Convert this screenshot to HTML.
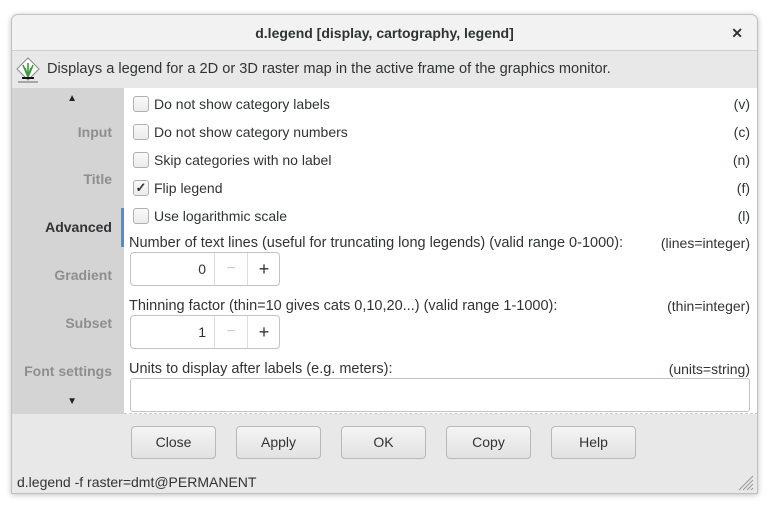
<!DOCTYPE html>
<html><head><style>
*{box-sizing:border-box;margin:0;padding:0}
body{width:774px;height:506px;background:#fff;font-family:"Liberation Sans",sans-serif;font-size:14px;color:#2e3436;position:relative;overflow:hidden}
.win{position:absolute;left:11px;top:14px;width:747px;height:480px;background:#e8e8e8;border:1px solid #c0c0c0;border-radius:7px 7px 0 0;box-shadow:0 1px 6px rgba(0,0,0,.25);overflow:hidden}
.title{position:absolute;left:0;top:0;width:100%;height:36px;background:#f2f2f2;border-bottom:1px solid #cfcfcf;text-align:center;line-height:36px;font-weight:bold;font-size:14px}
.x{position:absolute;right:14px;top:0;font-size:14px;font-weight:bold}
.desc{position:absolute;left:0;top:37px;width:100%;height:36px;line-height:34px;padding-left:35px;font-size:14.6px}
.side{position:absolute;left:0;top:73px;width:112px;height:326px;background:#d4d4d4}
.side div{position:absolute;right:12px;font-weight:bold;color:#8e8e8e;font-size:14px}
.content{position:absolute;left:112px;top:73px;width:634px;height:326px;background:#fff;border-right:1px dashed #ccc;border-bottom:1px dashed #ccc}
.row{position:absolute;left:9px;right:7px;height:20px;line-height:20px}
.cb{position:absolute;left:0;top:2px;width:16px;height:16px;border:1px solid #b0b0b0;border-radius:3px;background:linear-gradient(#fafafa,#ececec)}
.row .t{position:absolute;left:21px}
.row .r{position:absolute;right:0}
.lbl{position:absolute;left:5px;right:7px;height:18px;line-height:18px;font-size:14.5px}
.lbl .r{position:absolute;right:0;font-size:14px}
.spin{position:absolute;left:6px;width:150px;height:34px;border:1px solid #c3c3c3;border-radius:4px;background:#fff}
.spin .v{position:absolute;left:0;width:75px;text-align:right;top:8px}
.spin .m{position:absolute;left:83px;width:33px;height:100%;border-left:1px solid #ddd;text-align:center;line-height:32px;color:#ccc;font-size:16px}
.spin .p{position:absolute;left:116px;width:33px;height:100%;border-left:1px solid #ddd;text-align:center;line-height:32px;font-size:18px}
.btn{position:absolute;top:411px;width:85px;height:33px;border:1px solid #b8b8b8;border-radius:4px;background:linear-gradient(#f4f4f4,#e2e2e2);text-align:center;line-height:31px;font-size:14px}
.status{position:absolute;left:5px;top:459px;font-size:14px}
</style></head><body>
<div class="win">
<div class="title">d.legend [display, cartography, legend]<span class="x">✕</span></div>
<div class="desc">
<svg style="position:absolute;left:4px;top:5px" width="24" height="26" viewBox="0 0 24 26"><path d="M12 1 L23 12 L12 23 L1 12 Z" fill="#fff" stroke="#888" stroke-width="1"/><path d="M12 20 L7 8 M12 20 L12 6 M12 20 L17 8 M12 20 L9 11 M12 20 L15 11" stroke="#3a9a3a" stroke-width="1.6" fill="none"/><path d="M6 21 h12" stroke="#111" stroke-width="2"/><path d="M2 25 h20" stroke="#666"/></svg>
Displays a legend for a 2D or 3D raster map in the active frame of the graphics monitor.</div>
<div class="side">
<div style="right:47px;top:5px;font-size:10px;color:#222">▲</div>
<div style="top:36px">Input</div>
<div style="top:83px">Title</div>
<div style="top:131px;color:#2e3436">Advanced</div>
<div style="top:179px">Gradient</div>
<div style="top:227px">Subset</div>
<div style="top:275px">Font settings</div>
<div style="right:47px;top:308px;font-size:10px;color:#222">▼</div>
</div>
<div style="position:absolute;left:109px;top:193px;width:3px;height:39px;background:#4a90d9"></div>
<div class="content">
<div class="row" style="top:6px"><span class="cb"></span><span class="t">Do not show category labels</span><span class="r">(v)</span></div>
<div class="row" style="top:34px"><span class="cb"></span><span class="t">Do not show category numbers</span><span class="r">(c)</span></div>
<div class="row" style="top:62px"><span class="cb"></span><span class="t">Skip categories with no label</span><span class="r">(n)</span></div>
<div class="row" style="top:90px"><span class="cb" style="text-align:center;line-height:13px;font-size:13px;font-weight:bold">✓</span><span class="t">Flip legend</span><span class="r">(f)</span></div>
<div class="row" style="top:118px"><span class="cb"></span><span class="t">Use logarithmic scale</span><span class="r">(l)</span></div>
<div class="lbl" style="top:146px">Number of text lines (useful for truncating long legends) (valid range 0-1000):<span class="r">(lines=integer)</span></div>
<div class="spin" style="top:164px"><span class="v">0</span><span class="m">−</span><span class="p">+</span></div>
<div class="lbl" style="top:209px">Thinning factor (thin=10 gives cats 0,10,20...) (valid range 1-1000):<span class="r">(thin=integer)</span></div>
<div class="spin" style="top:227px"><span class="v">1</span><span class="m">−</span><span class="p">+</span></div>
<div class="lbl" style="top:272px">Units to display after labels (e.g. meters):<span class="r">(units=string)</span></div>
<div style="position:absolute;left:6px;right:7px;top:290px;height:34px;border:1px solid #c3c3c3;border-radius:3px"></div>
</div>
<div class="btn" style="left:119px">Close</div>
<div class="btn" style="left:224px">Apply</div>
<div class="btn" style="left:329px">OK</div>
<div class="btn" style="left:434px">Copy</div>
<div class="btn" style="left:539px">Help</div>
<div class="status">d.legend -f raster=dmt@PERMANENT</div>
<svg style="position:absolute;right:3px;bottom:2px" width="18" height="18"><path d="M17 3 L3 17 M17 7 L7 17 M17 11 L11 17 M17 15 L15 17" stroke="#999"/></svg>
</div>
</body></html>
